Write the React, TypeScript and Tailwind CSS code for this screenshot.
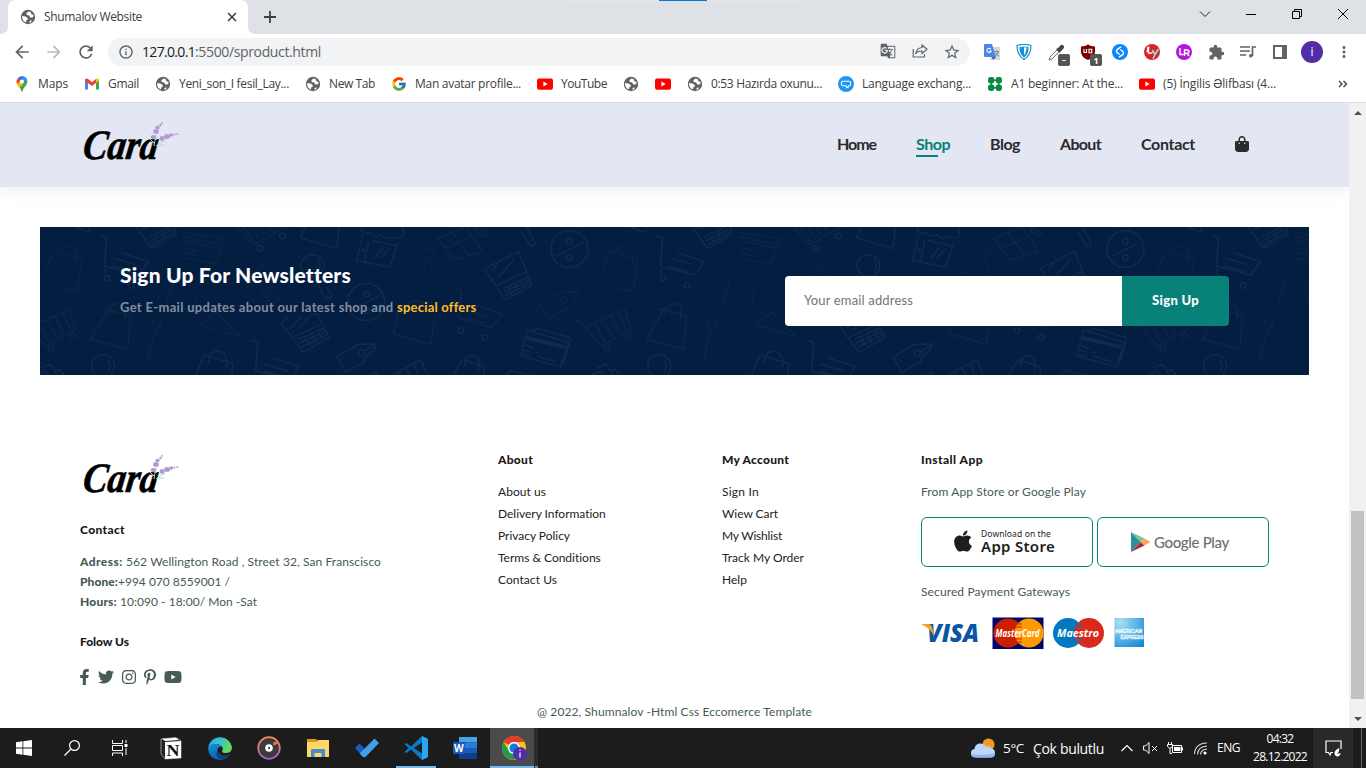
import { useLayoutEffect, useRef, useState, type ReactNode } from "react";
import { FcGoogle } from "react-icons/fc";
import { FaApple, FaFacebookF, FaInstagram, FaPinterestP, FaTwitter, FaYoutube } from "react-icons/fa";
import { FaBagShopping } from "react-icons/fa6";
import { MdArrowBack, MdArrowForward, MdExtension, MdGTranslate, MdMoreVert, MdOutlineInfo, MdRefresh, MdStarBorder } from "react-icons/md";

/* Text whose tracking is computed so that the run takes exactly `w` pixels. */
function Fit({ w, className = "", children }: { w: number; className?: string; children: string }) {
  const ref = useRef<HTMLSpanElement>(null);
  const [spacing, setSpacing] = useState(0);
  useLayoutEffect(() => {
    if (!ref.current) return;
    ref.current.style.letterSpacing = "0px";
    const natural = ref.current.getBoundingClientRect().width;
    const next = (w - natural) / children.length;
    ref.current.style.letterSpacing = `${next}px`;
    setSpacing(next);
  }, [w, children]);
  return (
    <span ref={ref} className={`inline-block shrink-0 whitespace-pre ${className}`} style={{ letterSpacing: spacing }}>
      {children}
    </span>
  );
}

const Globe = ({ className = "size-4" }: { className?: string }) => (
  <svg viewBox="0 0 16 16" className={`shrink-0 ${className}`}>
    <circle cx="8" cy="8" r="7.2" fill="#5f6368" />
    <path d="M8.3 2.4 L6.4 4.6 L6.8 6 L9.2 6.6 L10.2 8.4 L13.2 8.2 L13.6 6 L12 5.4 L11 4.6 L10.8 2.9 Z" fill="#fff" />
    <path d="M2.2 7 L5.4 7.6 L7.6 9 L7.8 10.6 L6.2 11.4 L6 13.6 L3.4 12 L2.2 9.6 Z" fill="#fff" />
    <path d="M9 13.8 L10 11.8 L12 11.6 L11 13.2 Z" fill="#fff" />
  </svg>
);

const YouTubeMark = () => (
  <svg viewBox="0 0 16 16" className="size-4 shrink-0">
    <rect x="0" y="2.4" width="16" height="11.4" rx="2" fill="#f00" />
    <path d="M6.4 5.6 L10.6 8.1 L6.4 10.6 Z" fill="#fff" />
  </svg>
);

const MapsMark = () => (
  <svg viewBox="0 0 16 16" className="size-4 shrink-0">
    <path d="M8 0.2 A5.4 5.4 0 0 1 13.4 5.6 C13.4 9.5 9.4 11 8.7 15 Q8 16.5 7.3 15 C6.9 12.6 5 11.2 3.9 9.6 L10 3 Z" fill="#34a853" />
    <path d="M3.9 9.6 C3 8.4 2.6 7 2.6 5.6 L6 3.6 L9.6 7.2 L5.8 11.9 Q4.8 10.9 3.9 9.6Z" fill="#fbbc04" />
    <path d="M8 0.2 A5.4 5.4 0 0 1 12.9 3.2 L9.5 7 L6.2 4.2 L9.6 0.4Z" fill="#4285f4" />
    <path d="M8 0.2 A5.4 5.4 0 0 0 3.8 2.2 L6.4 4.4 L9.8 0.5Z" fill="#1a73e8" />
    <path d="M3.8 2.2 A5.4 5.4 0 0 0 3.2 8 L6.4 4.4Z" fill="#ea4335" />
    <circle cx="8" cy="5.6" r="2" fill="#fff" />
  </svg>
);

const GmailMark = () => (
  <svg viewBox="0 0 16 16" className="size-4 shrink-0">
    <path d="M1 4 V13.5 H4 V6.5 Z" fill="#4285f4" />
    <path d="M15 4 V13.5 H12 V6.5 Z" fill="#34a853" />
    <path d="M1 3.4 Q2.2 1.8 4 3 L8 6.2 L12 3 V6.8 L8 10 L1 5 Z" fill="#ea4335" />
    <path d="M12 3 Q14 1.6 15 3.6 V5 L12 7.2Z" fill="#fbbc04" />
  </svg>
);

const ChatMark = () => (
  <svg viewBox="0 0 16 16" className="size-4 shrink-0">
    <circle cx="8" cy="8" r="8" fill="#2196f3" />
    <path d="M5 5.2 H11 Q12.6 5.2 12.6 6.8 V8 Q12.6 9.8 10.8 9.8 Q10.8 11.4 8.6 11.6 Q9 10.6 8.2 9.8 H5 Q3.4 9.8 3.4 8 V6.8 Q3.4 5.2 5 5.2Z" fill="none" stroke="#fff" strokeWidth="1.1" />
  </svg>
);

const CloverMark = () => (
  <svg viewBox="0 0 16 16" className="size-4 shrink-0" fill="#0b8a42">
    <rect x="1" y="1" width="6.4" height="6.4" rx="2.4" />
    <rect x="8.6" y="1" width="6.4" height="6.4" rx="2.4" />
    <rect x="1" y="8.6" width="6.4" height="6.4" rx="2.4" />
    <rect x="8.6" y="8.6" width="6.4" height="6.4" rx="2.4" />
    <path d="M6 3.5h4v1.5H6zM6 11h4v1.5H6zM3.5 6h1.5v4H3.5zM11 6h1.5v4H11z" />
  </svg>
);

const bookmarks: { icon: ReactNode; text?: string; w?: number }[] = [
  { icon: <MapsMark />, text: "Maps", w: 30 },
  { icon: <GmailMark />, text: "Gmail", w: 31 },
  { icon: <Globe />, text: "Yeni_son_I fesil_Lay...", w: 110 },
  { icon: <Globe />, text: "New Tab", w: 46 },
  { icon: <FcGoogle className="size-4 shrink-0" />, text: "Man avatar profile...", w: 106 },
  { icon: <YouTubeMark />, text: "YouTube", w: 46 },
  { icon: <Globe /> },
  { icon: <YouTubeMark /> },
  { icon: <Globe />, text: "0:53 Hazırda oxunu...", w: 111 },
  { icon: <ChatMark />, text: "Language exchang...", w: 109 },
  { icon: <CloverMark />, text: "A1 beginner: At the...", w: 112 },
  { icon: <YouTubeMark />, text: "(5) İngilis Əlifbası (4...", w: 113 },
];

const Cell = ({ children }: { children: ReactNode }) => (
  <div className="flex h-full w-8 shrink-0 items-center justify-center">{children}</div>
);

function Browser() {
  return (
    <div className="h-[103px] border-b border-[#dadce0] bg-white font-['Open_Sans',sans-serif] text-xs text-[#3c4043]">
      <div className="relative flex h-[34px] bg-[#dee1e6]">
        <div className="absolute left-[561px] top-0 flex h-px w-[242px] bg-[#e6e6e6]">
          <div className="ml-[98px] h-px w-12 bg-[#0078d7]" />
        </div>
        <svg className="h-[34px] w-[256px] shrink-0" viewBox="0 0 256 34">
          <path d="M0 34 Q8 34 8 26 V8 Q8 0 16 0 H240 Q248 0 248 8 V26 Q248 34 256 34Z" fill="#fff" />
        </svg>
        <div className="absolute left-5 top-0 flex h-[34px] w-[220px] items-center">
          <Globe />
          <Fit w={98} className="ml-2">Shumalov Website</Fit>
          <svg className="ml-auto size-4" viewBox="0 0 16 16" stroke="#3c4043" strokeWidth="1.6">
            <path d="M4 4l8 8M12 4l-8 8" />
          </svg>
        </div>
        <svg className="ml-1.5 mt-[9px] size-4" viewBox="0 0 16 16" stroke="#3c4043" strokeWidth="1.8">
          <path d="M8 2v12M2 8h12" />
        </svg>
        <div className="ml-auto flex h-7 items-center">
          <div className="flex w-[46px] justify-center">
            <svg className="h-3 w-3" viewBox="0 0 12 12" fill="none" stroke="#222"><path d="M1 3.5l5 5 5-5" /></svg>
          </div>
          <div className="flex w-[46px] justify-center">
            <svg className="h-3 w-3" viewBox="0 0 12 12" fill="none" stroke="#000"><path d="M1 6.5h10" /></svg>
          </div>
          <div className="flex w-[46px] justify-center">
            <svg className="h-3 w-3" viewBox="0 0 12 12" fill="none" stroke="#000"><path d="M1.5 3.5h7v7h-7zM3.5 3.5v-2h7v7h-2" /></svg>
          </div>
          <div className="flex w-[46px] justify-center">
            <svg className="h-3 w-3" viewBox="0 0 12 12" fill="none" stroke="#000"><path d="M1 1l10 10M11 1L1 11" /></svg>
          </div>
        </div>
      </div>
      <div className="flex h-9 items-center pl-1.5 text-[#5f6368]">
        <Cell><MdArrowBack className="size-5" /></Cell>
        <Cell><MdArrowForward className="size-5 text-[#babcbe]" /></Cell>
        <Cell><MdRefresh className="size-5" /></Cell>
        <div className="ml-1.5 flex h-7 w-[862px] items-center rounded-full bg-[#f1f3f4]">
          <MdOutlineInfo className="ml-2.5 size-4" />
          <Fit w={53} className="ml-2 text-sm text-[#202124]">127.0.0.1</Fit>
          <Fit w={126} className="text-sm">:5500/sproduct.html</Fit>
          <div className="ml-auto mr-0.5 flex">
            <Cell><MdGTranslate className="size-4" /></Cell>
            <Cell>
              <svg className="size-4" viewBox="0 0 16 16" fill="none" stroke="#5f6368" strokeWidth="1.2">
                <path d="M1.2 6 V14 H12.5 V11" />
                <path d="M10 2 L15 6.3 L10 10.4 V8 Q5.5 8 3.6 11 Q4.4 5 10 4.5Z" />
              </svg>
            </Cell>
            <Cell><MdStarBorder className="size-[18px]" /></Cell>
          </div>
        </div>
        <div className="ml-1.5 flex h-full">
          <Cell>
            <svg className="size-4" viewBox="0 0 16 16">
              <rect x="6" y="3" width="10" height="13" fill="#d5d7da" />
              <path d="M1 0h7l4 13H1Q0 13 0 12V1Q0 0 1 0Z" fill="#4a86ee" />
              <path d="M8 13h4l-3 3Z" fill="#2a56c6" />
              <path d="M6.8 5.2A2.1 2.1 0 1 0 7.1 7H5.2" fill="none" stroke="#fff" strokeWidth="1.1" />
              <path d="M10.5 7.5h4.5M12.8 6.5v1M11 12q3-1.5 3.3-4.5M11.8 8.5q1 2.5 3 3.5" fill="none" stroke="#7a7d80" strokeWidth=".9" />
            </svg>
          </Cell>
          <Cell>
            <svg className="size-4" viewBox="0 0 16 16" fill="none" stroke="#1790d0" strokeWidth="1.2">
              <path d="M1 1.5Q8-.5 15 1.5Q15 11 8 15.5Q1 11 1 1.5Z" />
              <path d="M4 3.5Q8 2.5 12 3.5Q12 9.5 8 12.8Q4 9.5 4 3.5Z" fill="#1790d0" />
              <path d="M8 3.5Q10 3 10.5 4Q10 9 8 11Z" fill="#fff" stroke="none" />
            </svg>
          </Cell>
          <Cell>
            <svg className="ml-1 mt-1.5 h-[22px] w-[24px] shrink-0" viewBox="0 0 24 22">
              <path d="M3 16 L4 13 L11 6 L13 8 L6 15Z" fill="#f4f4f4" stroke="#777" />
              <path d="M10 5 L12 4 L15 1 Q18 0 18 4 L15 7 L14 9Z" fill="#444" />
              <rect x="12" y="10" width="12" height="12" rx="2" fill="#555" />
              <path d="M16.5 16.5h3" stroke="#fff" />
            </svg>
          </Cell>
          <Cell>
            <svg className="ml-1 mt-1.5 h-[22px] w-[24px] shrink-0" viewBox="0 0 24 22">
              <path d="M3 2.5 Q7 2.5 10 .5 Q13 2.5 17 2.5 V8 Q17 13 10 16 Q3 13 3 8Z" fill="#800000" />
              <path d="M6 5v3.5h2.5V5M11 8.7h2.8V5.3H11z" fill="none" stroke="#fff" strokeWidth="1.1" />
              <rect x="12" y="10" width="12" height="12" rx="2" fill="#555" />
              <text x="15.5" y="19.5" fontSize="9" fontWeight="700" fill="#fff" fontFamily="Open Sans">1</text>
            </svg>
          </Cell>
          <Cell>
            <svg className="size-4" viewBox="0 0 16 16">
              <circle cx="8" cy="8" r="8" fill="#0a84ff" />
              <path d="M8.6 3.2L5.4 5.4Q3.6 7 5.4 8.8L7.2 10M7.4 12.8L10.6 10.6Q12.4 9 10.6 7.2L8.8 6" fill="none" stroke="#fff" strokeWidth="1.5" strokeLinecap="round" />
            </svg>
          </Cell>
          <Cell>
            <svg className="size-4" viewBox="0 0 16 16">
              <circle cx="8" cy="8" r="8" fill="#d8232a" />
              <path d="M3 8Q4 5 4 3M4.5 2.5v6.5q3 1 4-1" stroke="#fff" strokeWidth="1.4" fill="none" />
              <path d="M8.5 6l2.5 4.5L14.5 5M11 10.5L9 15" stroke="#9fd8d2" strokeWidth="1.7" fill="none" />
            </svg>
          </Cell>
          <Cell>
            <svg className="size-4" viewBox="0 0 16 16">
              <circle cx="8" cy="8" r="8" fill="#b517d6" />
              <path d="M4 4v6.5h3.5M8.5 12V6H11q2 0 2 1.6T11 9.2H8.5M10.8 9.2L13 12" stroke="#fff" strokeWidth="1.4" fill="none" />
            </svg>
          </Cell>
          <Cell><MdExtension className="size-[17px]" /></Cell>
          <Cell>
            <svg className="size-4" viewBox="0 0 16 16" fill="none" stroke="#5f6368" strokeWidth="1.7">
              <path d="M0 3h10M0 7h10M0 11h6M12.5 12V3H16" /><circle cx="10.8" cy="11.8" r="1.8" fill="#5f6368" stroke="none" />
            </svg>
          </Cell>
          <Cell>
            <svg className="size-3.5" viewBox="0 0 14 14"><path d="M1 1h12v12H1z" fill="#fff" stroke="#5f6368" strokeWidth="2" /><path d="M9 1h5v12H9z" fill="#5f6368" /></svg>
          </Cell>
          <Cell>
            <div className="flex size-[22px] shrink-0 items-center justify-center rounded-full bg-[#512da8] text-white">i</div>
          </Cell>
          <Cell><MdMoreVert className="size-[18px]" /></Cell>
        </div>
      </div>
      <div className="flex h-7 items-center gap-4 pl-3.5 pr-[18px]">
        {bookmarks.map((b, i) => (
          <div key={i} className="flex shrink-0 items-center gap-2">
            {b.icon}
            {b.text && <Fit w={b.w ?? 0}>{b.text}</Fit>}
          </div>
        ))}
        <svg className="ml-auto size-2.5" viewBox="0 0 10 10" fill="none" stroke="#3c4043" strokeWidth="1.4"><path d="M1 2l3 3-3 3M5.5 2l3 3-3 3" /></svg>
      </div>
    </div>
  );
}

function CaraLogo() {
  return (
    <svg className="h-[42px] w-[102px] shrink-0 overflow-visible" viewBox="0 0 102 42">
      <g transform="translate(5 0) skewX(-8)">
        <text x="2" y="36.5" textLength="75" lengthAdjust="spacingAndGlyphs" fontFamily="Liberation Serif" fontStyle="italic" fontWeight="700" fontSize="42" fill="#000" stroke="#000" strokeWidth=".6">
          Cara
        </text>
      </g>
      <g stroke="#a9dcb5" strokeWidth="1" fill="none">
        <path d="M74 24 Q75 18 76 13M76 24 Q80 20 86 18M70 17 L75 22M77 23 L84 23" />
      </g>
      <g fill="#b39ad6">
        <ellipse cx="73.5" cy="15" rx="2.8" ry="2" /><ellipse cx="76" cy="9.5" rx="2.8" ry="2.4" />
        <ellipse cx="77.5" cy="5.5" rx="2.2" ry="1.8" /><circle cx="80.5" cy="3" r="1.2" /><circle cx="82" cy="1" r=".9" />
        <ellipse cx="82" cy="16.5" rx="2.5" ry="2.4" /><ellipse cx="87" cy="14.5" rx="3" ry="2.5" />
        <ellipse cx="91.2" cy="13" rx="2" ry="1.8" /><circle cx="94.5" cy="12.5" r="1" /><circle cx="97.3" cy="12" r="1" />
      </g>
    </svg>
  );
}

/* One repeat of the shopping pattern, 1557 × 450 units. */
const Doodles = () => (
  <g>
    {/* card reader and striped cart */}
    <path d="M8 22L125 40L98 115L8 98M8 35L112 58M8 45L108 68M14 68L50 76M12 82L44 90" opacity=".55" />
    <path d="M160 5L205 60L295 5M178 5L208 52M200 5L222 42M222 5L240 30M245 5L258 18" opacity=".7" />
    <circle cx="287" cy="32" r="8" /><circle cx="224" cy="69" r="8" />
    <path d="M352 5L337 38L440 70L446 5" />
    {/* store */}
    <path d="M512 28L495 105L588 125L610 52M528 48L517 110M536 45L606 62M545 98L572 65M562 98L590 68" />
    <path d="M507 5Q510 32 530 22Q548 40 562 28Q578 48 592 34Q625 48 627 20L620 5" /><circle cx="514" cy="75" r="4" />
    {/* gift */}
    <path d="M722 40L800 5L847 78L768 104ZM740 70L828 30M762 20L808 90M820 5Q855 15 858 30Q838 38 822 10M847 78L826 84" opacity=".65" />
    <path d="M958 20L980 60Q998 66 992 48L970 5" />
    {/* percent badge */}
    <ellipse cx="1091" cy="71" rx="52" ry="55" /><path d="M1055 92L1128 52" /><circle cx="1091" cy="48" r="8" /><circle cx="1091" cy="96" r="8" />
    <path d="M1262 5L1302 22L1304 10" />
    {/* shopping bags */}
    <path d="M1205 78L1282 102L1270 195L1225 190M1205 78L1182 135M1215 90Q1220 60 1246 64Q1274 72 1268 112" opacity=".55" />
    <path d="M1358 244L1308 338L1411 368L1418 268L1340 248M1358 268Q1360 232 1390 232Q1412 240 1402 280" opacity=".75" />
    <path d="M615 235L598 322L702 354L713 275M640 235Q650 218 680 228Q688 250 684 265" opacity=".75" />
    <path d="M42 450L68 385L148 410L145 450M80 408Q82 372 108 373Q136 380 130 420" />
    <path d="M762 450L790 398L853 420L852 450M796 418Q798 386 820 386Q844 392 836 430" />
    {/* wire carts */}
    <path d="M1335 32L1352 38L1346 122L1442 148L1468 108L1394 82M1372 98L1432 116M1370 122L1424 138M1350 128L1345 145" />
    <circle cx="1353" cy="157" r="8" /><circle cx="1421" cy="179" r="8" />
    <path d="M775 190L788 195L782 276L874 304L902 262L828 238M806 255L862 272M804 275L855 290" opacity=".8" />
    <circle cx="786" cy="312" r="8" /><circle cx="854" cy="333" r="8" />
    <path d="M200 342L217 347L212 432L280 450M258 394L333 418L318 450M236 412L302 432M234 432L292 450" />
    {/* laptops */}
    <path d="M853 130L948 78L986 178L912 222ZM888 178L972 138M875 135L890 112M892 155L936 102M908 188L974 154M904 200L978 164M910 210L982 172M920 186L932 210M938 176L950 200M956 166L968 190" />
    <path d="M284 290L302 270M366 268L385 262L418 332L345 378L284 290M320 330L402 292M308 308L340 270M328 312L360 272M332 338L406 304M334 350L410 314M340 362L414 324M350 332L364 358M368 324L382 350M386 314L400 338" />
    <path d="M1437 8L1478 70L1548 26L1540 5M1450 12L1470 5M1468 36L1530 5M1472 48L1538 12M1478 60L1544 20M1486 32L1498 54M1504 22L1516 44" />
    {/* magnifier */}
    <circle cx="371" cy="120" r="32" /><path d="M385 102Q398 118 388 136M384 168L402 210Q418 226 426 210L410 184" />
    <ellipse cx="522" cy="228" rx="52" ry="55" /><path d="M492 245L560 208" /><circle cx="524" cy="205" r="8" /><circle cx="524" cy="254" r="8" />
    {/* hangers */}
    <path d="M622 148L700 108L712 155M690 84Q688 66 706 70Q720 86 700 96L702 108" opacity=".4" />
    <path d="M55 295L100 258L170 332Z" opacity=".6" />
    <path d="M180 200L232 118L280 225L205 245M195 225L268 190M215 150L250 232" opacity=".4" />
    <path d="M20 175L50 190L45 230L15 250M8 150L30 165" opacity=".4" />
    {/* tags */}
    <path d="M1006 236L1060 200L1115 198Q1108 226 1090 242L1032 278Z" opacity=".45" /><circle cx="1076" cy="222" r="9" opacity=".6" />
    <path d="M440 390L500 353L550 352Q546 376 524 386L516 406L464 436ZM514 374L550 354" /><circle cx="508" cy="379" r="9" />
    {/* credit card */}
    <path d="M972 311L1088 348L1066 420L954 388ZM985 318L1002 306L1095 334L1074 410M966 356L992 366M962 370L984 377M960 382L980 388M1000 388L1052 404M996 376L1006 379" />
    <path d="M970 334L1080 362" strokeWidth="11" />
    {/* striped basket */}
    <path d="M1100 290L1118 284L1182 358L1264 310L1246 250L1140 300M1160 290L1192 348M1182 280L1214 334M1206 270L1232 320M1228 260L1252 308" opacity=".65" />
    <circle cx="1258" cy="329" r="8" opacity=".7" /><circle cx="1196" cy="366" r="8" opacity=".7" />
    <path d="M585 450L676 398L694 450M612 436L620 450M634 424L646 450M656 412L670 450M530 446L548 436L558 450" />
    <path d="M910 450L926 430L1000 450" />
    <path d="M1168 424L1194 412L1216 450M1155 444L1178 432L1190 450M1204 432Q1222 424 1232 444" />
    <ellipse cx="1342" cy="418" rx="32" ry="34" /><path d="M1356 400Q1368 416 1356 436" />
    <path d="M1478 300Q1480 276 1504 282Q1510 300 1488 310L1468 394L1478 396M1540 158L1520 235" opacity=".5" />
  </g>
);

function Newsletter() {
  return (
    <section className="relative mx-10 mt-10 flex h-[148px] items-center justify-between bg-[#041e42] px-20">
      <svg className="absolute inset-0 h-full w-full" viewBox="0 0 1269 148" fill="none" stroke="#112a4b" strokeWidth="4.5" strokeLinejoin="round">
        {[-416, 140, 696, 1252].map((x) => (
          <g key={x} transform={`translate(${x} -2) scale(.357 .3378)`}><Doodles /></g>
        ))}
      </svg>
      <div className="relative flex h-[80px] flex-col items-start">
        <Fit w={230} className="text-[21px] leading-7 font-black text-white">Sign Up For Newsletters</Fit>
        <p className="mt-2 flex text-[13px] leading-5 font-bold text-[#818ea0]">
          <Fit w={277}>Get E-mail updates about our latest shop and </Fit>
          <Fit w={79} className="text-[#ffbd27]">special offers</Fit>
        </p>
      </div>
      <div className="relative flex h-[50px] w-[444px]">
        <div className="flex w-[337px] items-center rounded-l bg-white pl-[19px] text-[13px] text-[#757575]">
          <Fit w={109}>Your email address</Fit>
        </div>
        <div className="flex w-[107px] items-center justify-center rounded-r bg-[#088178] text-[13px] font-black text-white">
          <Fit w={47}>Sign Up</Fit>
        </div>
      </div>
    </section>
  );
}

const nav: [string, number][] = [["Home", 39], ["Shop", 34], ["Blog", 30], ["About", 41], ["Contact", 54]];

const linkColumns: { title: string; tw: number; width: string; links: [string, number][] }[] = [
  {
    title: "About", tw: 35, width: "w-[224px]",
    links: [["About us", 48], ["Delivery Information", 108], ["Privacy Policy", 72], ["Terms & Conditions", 103], ["Contact Us", 59]],
  },
  {
    title: "My Account", tw: 67, width: "w-[199px]",
    links: [["Sign In", 37], ["Wiew Cart", 56], ["My Wishlist", 60], ["Track My Order", 82], ["Help", 25]],
  },
];

const contactRows: [string, number, string, number][] = [
  ["Adress: ", 46, "562 Wellington Road , Street 32, San Franscisco", 255],
  ["Phone:", 38, "+994 070 8559001 /", 112],
  ["Hours: ", 40, "10:090 - 18:00/ Mon -Sat", 137],
];

function Heading({ w, children }: { w: number; children: string }) {
  return (
    <h4 className="flex h-5 items-center text-[12px] font-black text-[#1a1a1a]">
      <Fit w={w}>{children}</Fit>
    </h4>
  );
}

function Payments() {
  return (
    <svg className="mt-[15px] h-8 w-[224px]" viewBox="0 0 224 32" fontFamily="Open Sans" fontStyle="italic" fontWeight="700">
      <text x="6" y="24.5" fontSize="24" fontWeight="800" fill="#0b56a4" textLength="52" lengthAdjust="spacingAndGlyphs">VISA</text>
      <path d="M0 7H8Q10 7 11 10L13 19Q8 10 0 7Z" fill="#f2a01e" />
      <rect x="71.5" y=".5" width="51" height="31.5" fill="#00096b" />
      <circle cx="87" cy="16" r="14.5" fill="#cc1f00" />
      <circle cx="108" cy="16" r="14.5" fill="#ff9900" />
      <path d="M95 7h6M94 10h7M94 22h7M95 25h6" stroke="#cc1f00" strokeWidth="1.2" />
      <text x="74.5" y="20" fontSize="10.5" fill="#fff" textLength="44" lengthAdjust="spacingAndGlyphs">MasterCard</text>
      <circle cx="147" cy="16" r="15" fill="#0079c1" />
      <circle cx="168" cy="16" r="15" fill="#d9291c" />
      <path d="M155 7h6M154 10h7M154 22h7M155 25h6" stroke="#0079c1" strokeWidth="1.2" />
      <text x="136" y="20" fontSize="10.5" fill="#fff" textLength="42" lengthAdjust="spacingAndGlyphs">Maestro</text>
      <defs>
        <radialGradient id="amex" cx=".2" cy=".15" r="1.1">
          <stop offset="0" stopColor="#a8def5" /><stop offset="1" stopColor="#1187d2" />
        </radialGradient>
      </defs>
      <rect x="193.5" y="1" width="29.5" height="29" fill="url(#amex)" />
      <g fontFamily="Liberation Sans" fontStyle="normal" fontSize="5.5" fill="none" stroke="#e4f5fd" strokeWidth=".6">
        <text x="194" y="15.5" textLength="27" lengthAdjust="spacingAndGlyphs">AMERICAN</text>
        <text x="199.5" y="21.5" textLength="23" lengthAdjust="spacingAndGlyphs">EXPRESS</text>
      </g>
    </svg>
  );
}

function Site() {
  return (
    <div className="h-[625px] w-[1349px] overflow-hidden bg-white font-['Lato',sans-serif]">
      <header className="flex h-[84px] items-center justify-between bg-[#e3e6f3] pl-20 pr-[99px] shadow-[0_5px_15px_rgba(0,0,0,0.06)]">
        <div className="pb-1"><CaraLogo /></div>
        <nav className="flex items-center gap-10 pb-0.5 text-base font-bold text-[#2b2b2b]">
          {nav.map(([label, w]) => (
            <div key={label} className={label === "Shop" ? "relative text-[#088178]" : "relative"}>
              <Fit w={w}>{label}</Fit>
              {label === "Shop" && <div className="absolute -bottom-px left-0 h-0.5 w-[22px] bg-[#088178]" />}
            </div>
          ))}
          <FaBagShopping className="-ml-px size-4" />
        </nav>
      </header>
      <Newsletter />
      <footer className="flex h-[353px] flex-col pt-[75px] text-[12px] text-[#465b52]">
        <div className="flex h-[252px] pl-20">
          <div className="flex w-[418px] flex-col pt-[5px]">
            <CaraLogo />
            <div className="mt-[23px]"><Heading w={45}>Contact</Heading></div>
            <div className="mt-3">
              {contactRows.map(([label, lw, value, vw]) => (
                <p key={label} className="flex h-5 items-center">
                  <Fit w={lw} className="font-black">{label}</Fit>
                  <Fit w={vw}>{value}</Fit>
                </p>
              ))}
            </div>
            <div className="mt-5"><Heading w={49}>Folow Us</Heading></div>
            <div className="mt-[17px] flex h-4 items-center">
              <FaFacebookF className="-ml-[2px] h-4 w-[13px]" />
              <FaTwitter className="ml-[7px] size-4" />
              <FaInstagram className="ml-[7px] size-4" />
              <FaPinterestP className="ml-[5px] size-4" />
              <FaYoutube className="ml-1.5 h-4 w-[18px]" />
            </div>
          </div>
          {linkColumns.map((col) => (
            <div key={col.title} className={col.width}>
              <Heading w={col.tw}>{col.title}</Heading>
              <div className="mt-[11px] text-[#222222]">
                {col.links.map(([label, w]) => (
                  <div key={label} className="flex h-[22px] items-center"><Fit w={w}>{label}</Fit></div>
                ))}
              </div>
            </div>
          ))}
          <div>
            <Heading w={62}>Install App</Heading>
            <p className="mt-3 flex h-5 items-center"><Fit w={165}>From App Store or Google Play</Fit></p>
            <div className="mt-[15px] flex gap-1">
              <div className="flex h-[50px] w-[172px] items-center rounded-md border border-[#088178] pl-[30px] text-[#1e1e1e]">
                <FaApple className="-mt-0.5 h-6 w-[22px]" />
                <div className="-mt-[3px] ml-[7px] flex flex-col items-start font-['Noto_Sans',sans-serif]">
                  <Fit w={70} className="text-[8.5px] leading-[11px]">Download on the</Fit>
                  <Fit w={74} className="text-[15px] leading-[15px] font-semibold">App Store</Fit>
                </div>
              </div>
              <div className="flex h-[50px] w-[172px] items-center rounded-md border border-[#088178] pl-8">
                <svg className="h-5 w-[21px]" viewBox="0 0 21 20">
                  <path d="M1 0V20L11 10Z" fill="#2f8f9b" />
                  <path d="M1 0L14.5 6.5L11 10Z" fill="#7fc48f" />
                  <path d="M1 20L14.5 13.5L11 10Z" fill="#b5203f" />
                  <path d="M14.5 6.5L20.5 10L14.5 13.5L11 10Z" fill="#f3a95e" />
                </svg>
                <Fit w={75} className="ml-[3px] text-[15px] font-medium text-[#6d6e70]">Google Play</Fit>
              </div>
            </div>
            <p className="mt-[15px] flex h-5 items-center"><Fit w={149}>Secured Payment Gateways</Fit></p>
            <Payments />
          </div>
        </div>
        <div className="flex h-5 items-center justify-center">
          <Fit w={275}>@ 2022, Shumnalov -Html Css Eccomerce Template</Fit>
        </div>
      </footer>
    </div>
  );
}

function Scrollbar() {
  return (
    <div className="flex w-[17px] flex-col items-center bg-[#f1f1f1]">
      <svg className="mt-1.5 h-2 w-2" viewBox="0 0 8 8"><path d="M0 6L4 2L8 6Z" fill="#505050" /></svg>
      <div className="mt-[394px] h-[188px] w-[13px] bg-[#c1c1c1]" />
      <svg className="mt-4 h-2 w-2" viewBox="0 0 8 8"><path d="M0 2L4 6L8 2Z" fill="#505050" /></svg>
    </div>
  );
}

const Task = ({ wide = true, children }: { wide?: boolean; children: ReactNode }) => (
  <div className={`flex h-10 shrink-0 items-center justify-center ${wide ? "w-[49px]" : "w-12"}`}>{children}</div>
);

function Taskbar() {
  return (
    <div className="flex h-10 items-center bg-[#1c1c1c] font-['Open_Sans',sans-serif] text-white">
      <Task wide={false}>
        <svg className="size-4" viewBox="0 0 16 16" fill="#fff"><path d="M0 2.2L6.5 1.3V7.6H0zM7.3 1.2L16 0V7.6H7.3zM0 8.4H6.5V14.7L0 13.8zM7.3 8.4H16V16L7.3 14.8z" /></svg>
      </Task>
      <Task wide={false}>
        <svg className="size-4" viewBox="0 0 16 16" fill="none" stroke="#fff" strokeWidth="1.2"><circle cx="10.5" cy="5.5" r="4.9" /><path d="M7 9L.5 15.5" /></svg>
      </Task>
      <Task wide={false}>
        <svg className="size-4" viewBox="0 0 16 16" fill="none" stroke="#fff"><path d="M.5 0v3.5h10V0M.5 16v-3h10v3M.5 5.5h10v5H.5zM14 0v3M14 8v7" /><path d="M12.5 4h3v3h-3z" fill="#fff" stroke="none" /></svg>
      </Task>
      <div className="w-0.5" />
      <Task>
        <svg className="size-6" viewBox="0 0 24 24">
          <path d="M2 3L17 1.5L22 5V22L6 23L2 18Z" fill="#222" stroke="#aaa" strokeWidth=".8" />
          <path d="M6 6L22 5V22L6 23Z" fill="#fff" />
          <path d="M3 2.7L17 1.8L20 4L6 5Z" fill="#fff" />
          <text x="7.5" y="19.5" fontFamily="Liberation Serif" fontWeight="700" fontSize="16" textLength="13" lengthAdjust="spacingAndGlyphs" fill="#111">N</text>
        </svg>
      </Task>
      <Task>
        <svg className="size-6" viewBox="0 0 24 24">
          <defs>
            <linearGradient id="edgeTop" x1="0" y1="0" x2="1" y2=".4"><stop offset="0" stopColor="#2aa7e6" /><stop offset=".5" stopColor="#35c1d0" /><stop offset="1" stopColor="#66dc55" /></linearGradient>
            <linearGradient id="edgeLow" x1="0" y1="0" x2=".6" y2="1"><stop offset="0" stopColor="#1496e0" /><stop offset="1" stopColor="#0b55a8" /></linearGradient>
          </defs>
          <path d="M.5 10A12 11.5 0 0 1 24 11Q24 17 17.5 17Q14 17 14 15Q15.5 13.5 14.5 11.5Q13 8.5 8.5 8Q3 8 .5 12Z" fill="url(#edgeTop)" />
          <path d="M0 12.5Q2.5 7.5 8.5 8Q12 8.5 13.5 10.5Q9 11 9.5 14.5Q11 20.5 18 19.5L22 18Q18 24 12 24Q1 23.5 0 12.5Z" fill="url(#edgeLow)" />
          <path d="M9.4 14.5Q10 20.5 17 20L22 18Q17 24 12.5 23Q6 20 9.4 14.5Z" fill="#123f7c" />
        </svg>
      </Task>
      <Task>
        <svg className="size-6" viewBox="0 0 24 24">
          <defs><linearGradient id="groove" x1="0" y1="0" x2="0" y2="1"><stop offset="0" stopColor="#f58a4b" /><stop offset=".5" stopColor="#e0788a" /><stop offset="1" stopColor="#9a62c6" /></linearGradient></defs>
          <circle cx="12" cy="12" r="10.8" fill="#3b3b3e" stroke="url(#groove)" strokeWidth="1.7" />
          <circle cx="12" cy="12" r="3.8" fill="#fff" /><circle cx="12" cy="12" r="1.2" fill="#555" />
          <path d="M17 9.5A2 2 0 1 1 19 6V2.5L22 7" fill="#e96f63" />
        </svg>
      </Task>
      <Task>
        <svg className="size-[22px]" viewBox="0 0 22 22"><path d="M0 2h9l2 2v3H0z" fill="#d99a12" /><path d="M0 5h10l1-2h11v17H0z" fill="#ffd667" /><path d="M4 20v-7q0-1 1-1h12q1 0 1 1v7h-3.5v-4h-7v4z" fill="#3f8fd2" /></svg>
      </Task>
      <Task>
        <svg className="size-6" viewBox="0 0 24 24"><path d="M0 12L4.5 7.5L12 15L7.5 20.5Z" fill="#185abd" /><path d="M7.5 20.5L4.7 17.5L19.5 2.5L24 7L11 20.5Q9 22 7.5 20.5Z" fill="#41a0ee" /></svg>
      </Task>
      <div className="flex h-10 w-[49px] shrink-0 flex-col items-center">
        <svg className="mt-2 size-6" viewBox="0 0 24 24">
          <path d="M18 0L7 10.5L2.5 7L.5 8L4.5 12L.5 16L2.5 17L7 13.5L18 24L24 21V3Z" fill="#0a7ac6" />
          <path d="M18 6.5L10 12L18 17.5Z" fill="#1c1c1c" />
          <path d="M18 0L24 3V21L18 24Z" fill="#2aa5f2" />
        </svg>
        <div className="mt-1.5 h-0.5 w-10 bg-[#76b9ed]" />
      </div>
      <Task>
        <svg className="size-6" viewBox="0 0 24 24"><path d="M6 1h18v5.5H6z" fill="#41a5ee" /><path d="M6 6.5h18V12H6z" fill="#2b7cd3" /><path d="M6 12h18v5.5H6z" fill="#185abd" /><path d="M6 17.5h18V23H6z" fill="#103f91" /><path d="M0 6h12v12H0z" fill="#185abd" /><text x="1" y="15.8" fontFamily="Open Sans" fontWeight="700" fontSize="10" fill="#fff">W</text></svg>
      </Task>
      <div className="ml-px flex h-10 w-12 shrink-0 bg-[#2b2b2b]">
        <div className="flex w-11 flex-col items-center bg-[#4a4a4a]">
          <svg className="ml-1 mt-2 size-[25px]" viewBox="0 0 25 25">
            <circle cx="12" cy="12" r="12" fill="#fbc116" />
            <path d="M1.6 6A12 12 0 0 1 22.4 6H12A6 6 0 0 0 6.8 9Z" fill="#e33b2e" />
            <path d="M1.6 6A12 12 0 0 0 12 24L17 15L7 15Z" fill="#219a4c" />
            <circle cx="12" cy="12" r="6" fill="#fff" /><circle cx="12" cy="12" r="4.6" fill="#1a73e8" />
            <circle cx="18" cy="18" r="7" fill="#512da8" />
            <path d="M18 16.5v5M18 13.5v1.3" stroke="#fff" strokeWidth="1.2" />
          </svg>
          <div className="mt-[5px] h-0.5 w-11 bg-[#76b9ed]" />
        </div>
        <div className="ml-px mt-[38px] h-0.5 w-[3px] bg-[#5f8fb8]" />
      </div>
      <div className="ml-auto flex h-10 items-center">
        <svg className="h-5 w-6" viewBox="0 0 24 20">
          <circle cx="17.5" cy="6.5" r="6" fill="#f59a1c" />
          <path d="M5 19.5Q0 19.5 0 15Q0 11.5 3.5 11Q4 5.5 9.5 5.5Q13.5 5.5 15 9Q18 7 20.5 10.5Q24 11 24 15Q24 19.5 19.5 19.5Z" fill="#bcd5fb" />
          <path d="M5 19.5Q0 19.5 0 16Q10 18 24 15.5Q23.5 19.5 19.5 19.5Z" fill="#8fb5f5" />
        </svg>
        <Fit w={21} className="ml-2 text-[13.5px]">5°C</Fit>
        <Fit w={71} className="ml-[9px] text-[14px]">Çok bulutlu</Fit>
        <svg className="ml-[17px] h-3 w-3" viewBox="0 0 12 12" fill="none" stroke="#fff" strokeWidth="1.2"><path d="M.5 9L6 3.5L11.5 9" /></svg>
        <svg className="ml-2.5 h-3.5 w-[15px]" viewBox="0 0 15 14" fill="none" stroke="#fff"><path d="M.5 5h2L6 1.5v11L2.5 9h-2zM9 5l5 5M14 5L9 10" /></svg>
        <svg className="ml-[9px] h-3.5 w-4" viewBox="0 0 16 14" fill="none" stroke="#fff"><path d="M5.5 4.5h9v7h-9zM1.5 1v2M4.5 1v2M.5 3.5h5v2l-2 1.5h-1L.5 5.5zM3 7v5.5h2" /><path d="M7 6h6.5v4H7zM15 6.5h1v3h-1z" fill="#fff" stroke="none" /></svg>
        <svg className="ml-[11px] h-3.5 w-[13px]" viewBox="0 0 13 14" fill="none" stroke="#ddd" strokeWidth="1.1"><path d="M.5 13Q1 2.5 13 2M3.5 13.5Q4 5.5 13 5M6.5 13.5Q7 8.5 13 8" /><circle cx="11" cy="12" r="1.6" fill="#fff" stroke="none" /></svg>
        <Fit w={23} className="ml-2.5 text-[12px]">ENG</Fit>
        <div className="ml-[13px] flex w-[54px] flex-col items-center text-[12px] leading-[18px]">
          <Fit w={27}>04:32</Fit>
          <Fit w={54}>28.12.2022</Fit>
        </div>
        <div className="ml-1.5 flex h-10 w-10 items-center justify-center bg-[#292929]">
          <svg className="size-[17px]" viewBox="0 0 17 17" fill="none" stroke="#fff" strokeWidth="1.2"><path d="M8 12.5H6L5 15L3.5 12.5H1V1h15v8" /><path d="M14 8Q8 11 10 15Q12 18 15 15Q17 12 12 14Q15 11 14 8Z" fill="#fff" stroke="none" /></svg>
        </div>
        <div className="ml-2 mr-1 h-10 w-px bg-[#666]" />
      </div>
    </div>
  );
}

export default function App() {
  return (
    <div className="h-[768px] w-[1366px] overflow-hidden bg-white">
      <Browser />
      <div className="flex h-[625px]">
        <Site />
        <Scrollbar />
      </div>
      <Taskbar />
    </div>
  );
}
